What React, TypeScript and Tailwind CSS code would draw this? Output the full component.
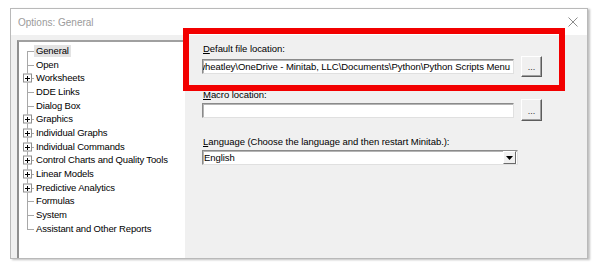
import React from "react";

type TreeItem = {
  name: string;
  plus?: boolean;
  selected?: boolean;
};

const treeItems: TreeItem[] = [
  { name: "General", selected: true },
  { name: "Open" },
  { name: "Worksheets", plus: true },
  { name: "DDE Links" },
  { name: "Dialog Box" },
  { name: "Graphics", plus: true },
  { name: "Individual Graphs", plus: true },
  { name: "Individual Commands", plus: true },
  { name: "Control Charts and Quality Tools", plus: true },
  { name: "Linear Models", plus: true },
  { name: "Predictive Analytics", plus: true },
  { name: "Formulas" },
  { name: "System" },
  { name: "Assistant and Other Reports" },
];

function TreeRow({ item, first, last }: { item: TreeItem; first: boolean; last: boolean }) {
  return (
    <div className="flex h-[13.7px] items-center">
      <div className="relative h-full w-[15px] shrink-0">
        <div
          className={`absolute left-[8px] w-px bg-[#a8a8a8] ${first ? "top-1/2" : "top-0"} ${
            last ? "bottom-1/2" : "bottom-0"
          }`}
        />
        <div className="absolute left-[8px] top-1/2 h-px w-[7px] bg-[#a8a8a8]" />
        {item.plus && (
          <div className="absolute left-[4px] top-1/2 h-[9px] w-[9px] -translate-y-1/2 border border-[#8e8e8e] bg-white">
            <svg width="7" height="7" viewBox="0 0 7 7" className="block" shapeRendering="crispEdges">
              <path d="M1 3.5h5M3.5 1v5" stroke="#000" strokeWidth="1" />
            </svg>
          </div>
        )}
      </div>
      <span className={item.selected ? "bg-[#e3e3e3] px-[2px] leading-[12px]" : "px-[2px] leading-[12px]"}>
        {item.name}
      </span>
    </div>
  );
}

function BrowseButton({ tall = false }: { tall?: boolean }) {
  return (
    <div
      className={`ml-[7px] flex w-[21px] items-center justify-center border border-t-white border-l-white border-r-[#5c5c5c] border-b-[#5c5c5c] bg-[#f0f0f0] pt-[2px] text-[9px] leading-[9px] text-[#333] shadow-[inset_-1px_-1px_0_#a0a0a0] ${
        tall ? "h-[22px]" : "h-[21px]"
      }`}
    >
      ...
    </div>
  );
}

const sunken =
  "border border-t-[#8a8a8a] border-l-[#8a8a8a] border-r-[#e0e0e0] border-b-[#e0e0e0] bg-white shadow-[inset_1px_1px_0_#b4b4b4]";

export default function App() {
  return (
    <div className="relative h-[268px] w-[600px] overflow-hidden bg-white pl-[10px] pt-[8px] font-['Liberation_Sans',Arial,sans-serif] text-[9.5px] tracking-[-0.05px] text-black">
      <div className="flex h-[251px] w-[578px] flex-col border border-[#b9b9b9] bg-[#f0f0f0] shadow-[2px_1px_2px_rgba(0,0,0,0.25)]">
        {/* title bar */}
        <div className="flex h-[26px] shrink-0 items-center justify-between bg-white pl-[7px] pr-[9px]">
          <span className="text-[10px] tracking-normal text-[#9b9b9b]">Options: General</span>
          <svg width="10" height="10" viewBox="0 0 10 10">
            <path d="M0.5 0.5l9 9M9.5 0.5l-9 9" stroke="#8c8c8c" strokeWidth="1" />
          </svg>
        </div>

        {/* body */}
        <div className="flex flex-1 pl-[6px] pt-[5px]">
          <div className="w-[168px] shrink-0 border-2 border-t-[#a0a0a0] border-l-[#8f8f8f] border-r-0 border-b-0 bg-white pt-[2px] tracking-[-0.15px]">
            {treeItems.map((item, i) => (
              <TreeRow key={item.name} item={item} first={i === 0} last={i === treeItems.length - 1} />
            ))}
          </div>

          <div className="ml-[17px] flex flex-col">
            <div className="ml-px mt-[3px] h-[11px] leading-[11px]">
              <span className="underline">D</span>efault file location:
            </div>
            <div className="mt-[2px] flex h-[21px] items-center">
              <div className={`flex h-[15px] w-[312px] items-center justify-end overflow-hidden whitespace-nowrap pr-[3px] ${sunken}`}>
                <span className="leading-[12px]">wheatley\OneDrive - Minitab, LLC\Documents\Python\Python Scripts Menu</span>
              </div>
              <BrowseButton />
            </div>

            <div className="ml-px mt-[12px] h-[11px] leading-[11px]">
              <span className="underline">M</span>acro location:
            </div>
            <div className="-mt-px flex h-[22px] items-center">
              <div className={`h-[15px] w-[312px] ${sunken}`} />
              <BrowseButton tall />
            </div>

            <div className="ml-px mt-[15px] h-[11px] leading-[11px]">
              <span className="underline">L</span>anguage (Choose the language and then restart Minitab.):
            </div>
            <div className={`mt-[3px] flex h-[15px] w-[316px] items-center justify-between ${sunken}`}>
              <span className="pl-[1px] leading-[12px]">English</span>
              <div className="mr-px flex h-[13px] w-[13px] items-center justify-center border border-t-white border-l-white border-r-[#6a6a6a] border-b-[#6a6a6a] bg-[#f0f0f0]">
                <svg width="7" height="4" viewBox="0 0 7 4">
                  <path d="M0 0h7L3.5 4z" fill="#000" />
                </svg>
              </div>
            </div>
          </div>
        </div>
      </div>

      {/* red annotation frame */}
      <div className="pointer-events-none absolute left-[183px] top-[28px] h-[63px] w-[382px] border-[6px] border-[#f20000]" />
    </div>
  );
}
